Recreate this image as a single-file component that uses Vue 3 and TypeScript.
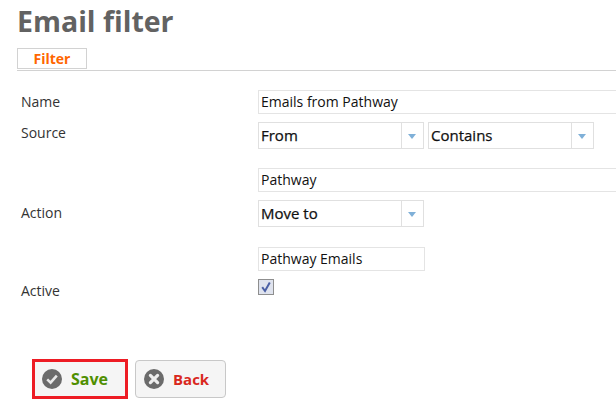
<script setup lang="ts">
const fieldRows = [
  { label: 'Name', key: 'name' },
  { label: 'Source', key: 'source' },
  { label: 'Action', key: 'action' },
  { label: 'Active', key: 'active' }
]
</script>

<template>
  <main class="page">
    <h1>Email filter</h1>
    <div class="tabs"><span class="tab">Filter</span></div>

    <form class="form" @submit.prevent>
      <template v-for="row in fieldRows" :key="row.key">
        <label class="label" :class="`label-${row.key}`">{{ row.label }}</label>

        <div v-if="row.key === 'name'" class="field">
          <div class="input wide">Emails from Pathway</div>
        </div>

        <div v-else-if="row.key === 'source'" class="field">
          <div class="selects">
            <div class="select"><span>From</span><i class="arrow"></i></div>
            <div class="select"><span>Contains</span><i class="arrow"></i></div>
          </div>
          <div class="input wide second">Pathway</div>
        </div>

        <div v-else-if="row.key === 'action'" class="field">
          <div class="select"><span>Move to</span><i class="arrow"></i></div>
          <div class="input short second-short">Pathway Emails</div>
        </div>

        <div v-else class="field">
          <span class="checkbox">
            <svg width="14" height="14" viewBox="0 0 14 14">
              <path d="M3.2 7.2 L6 11 L10.8 2.6" fill="none" stroke="#4a5fa5" stroke-width="2" />
            </svg>
          </span>
        </div>
      </template>
    </form>

    <div class="buttons">
      <button class="btn save" type="button">
        <svg class="icon" width="20" height="20" viewBox="0 0 20 20">
          <circle cx="10" cy="10" r="10" fill="#6b6b6b" />
          <path d="M5.2 10.4 L8.6 13.6 L14.8 6.6" fill="none" stroke="#e8e8e8" stroke-width="2.6" />
        </svg>
        <span>Save</span>
      </button>
      <button class="btn back" type="button">
        <svg class="icon" width="20" height="20" viewBox="0 0 20 20">
          <circle cx="10" cy="10" r="10" fill="#6b6b6b" />
          <path d="M6.4 6.4 L13.6 13.6 M13.6 6.4 L6.4 13.6" fill="none" stroke="#eeeeee" stroke-width="3.2" stroke-linecap="round" />
        </svg>
        <span>Back</span>
      </button>
    </div>
  </main>
</template>

<style>
html,
body {
  margin: 0;
  background: #fff;
  overflow: hidden;
}
</style>

<style scoped>
.page {
  height: 404px;
  overflow: hidden;
  padding-left: 17px;
  font-family: 'Open Sans', 'Noto Sans', sans-serif;
  color: #333;
}

h1 {
  margin: 0;
  padding-top: 2px;
  height: 44px;
  box-sizing: border-box;
  font-family: 'Open Sans', sans-serif;
  font-size: 28.5px;
  line-height: 38px;
  font-weight: 700;
  color: #626262;
}

.tabs {
  box-sizing: border-box;
  height: 23px;
  margin-top: 4px;
  border-bottom: 1px solid #d2d2d2;
}

.tab {
  display: block;
  box-sizing: border-box;
  width: 70px;
  height: 21px;
  border: 1px solid #d2d2d2;
  text-align: center;
  font-size: 14px;
  line-height: 19px;
  font-weight: 700;
  color: #ff6600;
}

.form {
  display: grid;
  grid-template-columns: 241px 1fr;
  padding-top: 19px;
  padding-left: 4px;
  margin-left: -4px;
}

.label {
  padding-left: 4px;
  font-size: 14px;
  line-height: 19px;
}

.label-name {
  padding-top: 2px;
}

.label-source {
  padding-top: 9px;
}

.label-action {
  padding-top: 3px;
}

.label-active {
  padding-top: 2px;
}

.field {
  min-width: 0;
}

.input {
  box-sizing: border-box;
  height: 24px;
  border: 1px solid #e4e4e4;
  padding-left: 2px;
  font-size: 14px;
  line-height: 22px;
  color: #111;
  white-space: nowrap;
}

.wide {
  width: 420px;
}

.short {
  width: 167px;
}

.second {
  margin-top: 19px;
  margin-bottom: 8px;
}

.second-short {
  margin-top: 20px;
  margin-bottom: 8px;
}

.selects {
  display: flex;
  gap: 4px;
  margin-top: 8px;
}

.select {
  box-sizing: border-box;
  display: flex;
  width: 166px;
  height: 27px;
  border: 1px solid #e0e0e0;
  font-size: 15px;
  line-height: 24px;
  color: #111;
}

.select span {
  flex: 1;
  padding-left: 2px;
  font-weight: 500;
  -webkit-text-stroke: 0.25px #111;
}

.arrow {
  position: relative;
  width: 21px;
  border-left: 1px solid #e0e0e0;
}

.arrow::after {
  content: '';
  position: absolute;
  left: 6px;
  top: 11px;
  border-left: 4px solid transparent;
  border-right: 4px solid transparent;
  border-top: 5px solid #7fb0d8;
}

.checkbox {
  display: block;
  box-sizing: border-box;
  width: 16px;
  height: 16px;
  border: 1px solid #8e8e8e;
  background: #dfe3ee;
}

.checkbox svg {
  display: block;
}

.buttons {
  display: flex;
  gap: 7px;
  margin-top: 59px;
  margin-left: 15px;
  align-items: center;
}

.btn {
  box-sizing: border-box;
  display: flex;
  align-items: center;
  height: 38px;
  padding: 0 0 0 8px;
  background: #f5f5f5;
  border: 1px solid #c8c8c8;
  border-radius: 4px;
  font-family: 'Open Sans', sans-serif;
  font-size: 15px;
  font-weight: 700;
}

.icon {
  flex: none;
}

.save {
  width: 96px;
  height: 40px;
  border: 3px solid #ed1c24;
  border-radius: 0;
  padding-left: 7px;
  font-size: 16px;
  color: #4f8f00;
}

.save span {
  margin-left: 9px;
}

.back {
  width: 91px;
  color: #d9281e;
}

.back span {
  margin-left: 9px;
}
</style>
